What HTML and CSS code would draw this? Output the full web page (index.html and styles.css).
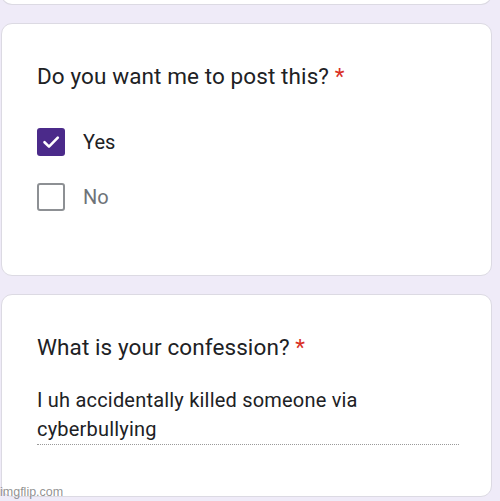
FILE: index.html
```html
<!DOCTYPE html>
<html>
<head>
<meta charset="utf-8">
<link rel="stylesheet" href="styles.css">
</head>
<body>
<div class="page">
  <div class="card card-prev"></div>
  <div class="card card-q">
    <div class="title">Do you want me to post this? <span class="req">*</span></div>
    <div class="options">
      <div class="option">
        <span class="box checked">
          <svg viewBox="0 0 28 28" width="28" height="28"><path d="M7.5 14.2 L12 18.6 L20.8 9.6" fill="none" stroke="#fff" stroke-width="2.6" stroke-linecap="round" stroke-linejoin="round"/></svg>
        </span>
        <span class="label">Yes</span>
      </div>
      <div class="option">
        <span class="box"></span>
        <span class="label muted">No</span>
      </div>
    </div>
  </div>
  <div class="card card-a">
    <div class="title">What is your confession? <span class="req">*</span></div>
    <div class="answer">I uh accidentally killed someone via cyberbullying</div>
  </div>
  <div class="watermark">imgflip.com</div>
</div>
</body>
</html>
```
FILE: styles.css
```css
html, body {
  margin: 0;
  padding: 0;
  background: #efebf8;
}
.page {
  position: relative;
  width: 500px;
  height: 501px;
  overflow: hidden;
  font-family: Roboto, "Noto Sans", sans-serif;
  color: #202124;
}
.card {
  background: #fff;
  border: 1px solid #dcdae3;
  border-radius: 11px;
  margin-left: 1px;
  width: 489px;
  box-sizing: content-box;
}
.card-prev {
  height: 4px;
  margin-top: -10px;
  border-top: none;
  border-radius: 0 0 11px 11px;
  padding-top: 10px;
}
.card-q {
  margin-top: 18px;
  height: 253px;
  padding: 40px 0 0 35px;
  box-sizing: border-box;
  width: 491px;
}
.card-a {
  margin-top: 18px;
  height: 203px;
  padding: 40px 0 0 35px;
  box-sizing: border-box;
  width: 491px;
}
.title {
  font-size: 22.5px;
  line-height: 24px;
  letter-spacing: 0.1px;
}
.req {
  color: #d93025;
}
.options {
  margin-top: 40px;
  display: flex;
  flex-direction: column;
  gap: 27px;
}
.option {
  display: flex;
  align-items: center;
  gap: 18px;
  height: 28px;
}
.box {
  width: 28px;
  height: 28px;
  box-sizing: border-box;
  border: 2.5px solid #8d9094;
  border-radius: 3px;
  display: block;
}
.box.checked {
  background: #4b2a8a;
  border: none;
}
.box svg {
  display: block;
}
.label {
  font-size: 20px;
}
.muted {
  color: #6e7378;
}
.answer {
  margin-top: 27px;
  width: 422px;
  font-size: 20px;
  line-height: 29px;
  letter-spacing: 0.2px;
  border-bottom: 1px dotted #9a9a9a;
}
.watermark {
  position: absolute;
  left: 0;
  top: 485px;
  font-size: 12.5px;
  color: rgba(110, 110, 110, 0.75);
  font-family: "Liberation Sans", Arial, sans-serif;
}
```
